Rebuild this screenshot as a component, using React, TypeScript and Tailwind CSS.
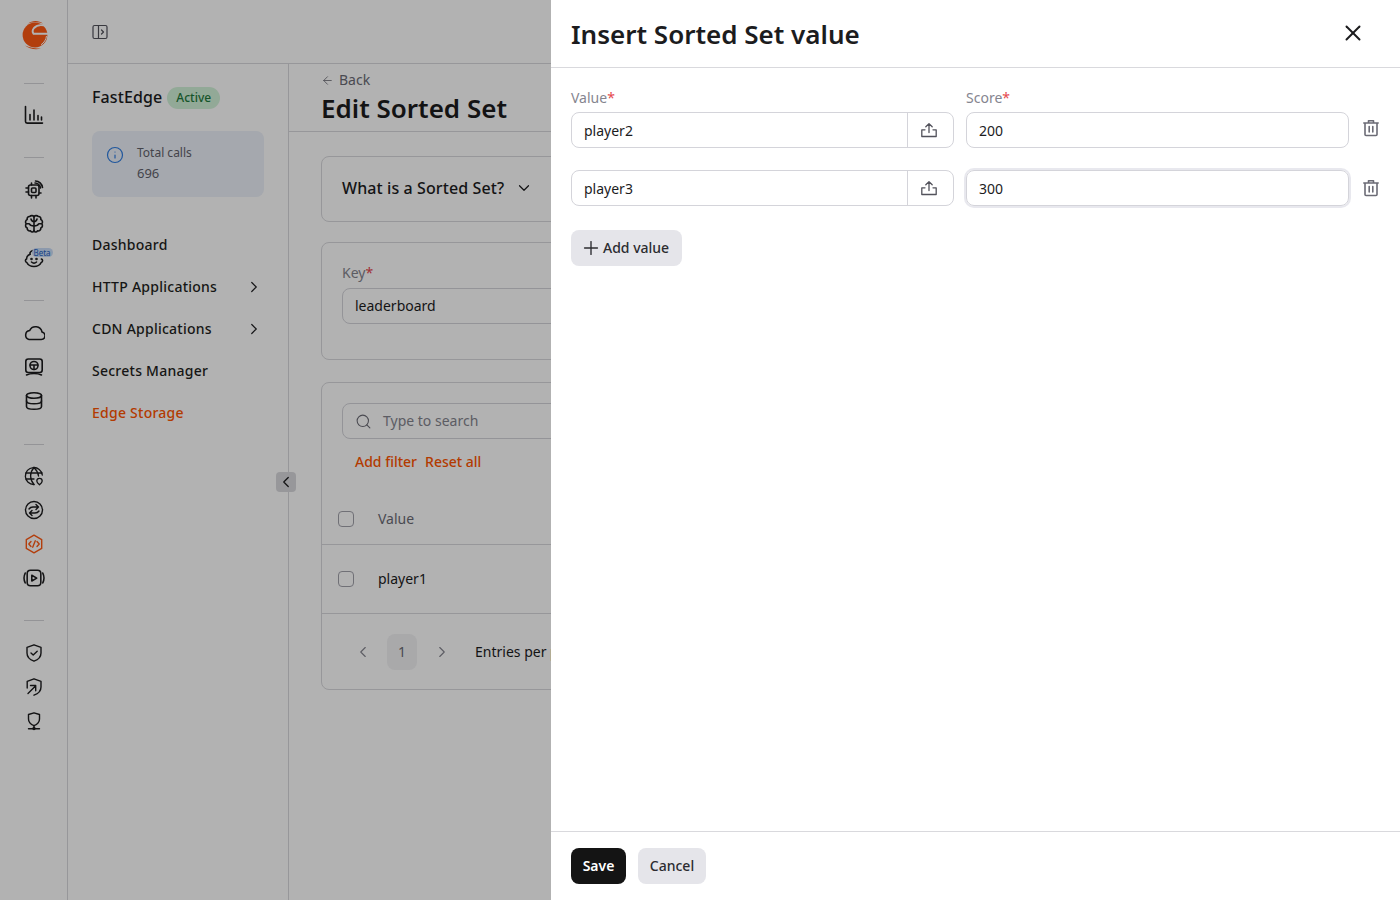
import React from "react";
import { ChevronDown, ChevronLeft, ChevronRight, Search, ArrowLeft, Plus, X, Info } from "lucide-react";

const S = ({ children, className = "", w = 20, sw = 1.6 }: { children: React.ReactNode; className?: string; w?: number; sw?: number }) => (
  <svg width={w} height={w} viewBox="0 0 20 20" fill="none" stroke="currentColor" strokeWidth={sw} strokeLinecap="round" strokeLinejoin="round" className={className}>
    {children}
  </svg>
);

const Logo = () => (
  <svg width="28" height="30" viewBox="0 0 28 30" fill="none">
    <circle cx="14" cy="15" r="12.400" fill="#ff5a14" />
    <path d="M7 3.500 C11 0 18 0 22 3.500 C17 1.800 11.500 2 7 3.500 Z" fill="#ff5a14" />
    <path d="M26 6.500 C21 4.500 16 4.800 13 8 C11.400 10 11.200 12 12.500 13.800 L27 13.800" stroke="#fff" strokeWidth="1.900" />
    <path d="M25.500 16 C25 20 23 22.500 20 24.800" stroke="#fff" strokeWidth="1" />
    <path d="M4 25.500 C8 29 15 30 20 28.500 C15 28.500 9 28 4 25.500 Z" fill="#ff5a14" />
  </svg>
);

const Chart = () => (
  <S w={20}><path d="M1.500 1.500V16.500a1.600 1.600 0 0 0 1.600 1.600H18.500" /><path d="M6 9.500V15M10 5V15M14 10.500V15M17.500 12V15" /></S>
);
const Chip = () => (
  <S><rect x="4.500" y="5" width="10.500" height="10.500" rx="2" /><rect x="7.500" y="8" width="4.500" height="4.500" rx="1" /><path d="M2 8h2.500M2 12h2.500M7.500 15.500V18M12 15.500V18M15 13h2M7.500 3v2" /><path d="M11 3c2.500 0 5 2 5.500 5M11.500 1c3.500 0 6.500 3 7 6.500" /></S>
);
const Brain = () => (
  <S>
    <path d="M10 3C9.500 1.500 7 1 5.800 2.500 4 2.200 2.800 3.800 3.200 5.500 1.500 6.200 1 8.500 2.200 9.800 1 11.200 1.600 13.500 3.200 14 3 16 4.800 17.500 6.500 16.800 7.500 18.500 9.700 18.200 10 16.500V3Z" />
    <path d="M10 3C10.500 1.500 13 1 14.200 2.500 16 2.200 17.200 3.800 16.800 5.500 18.500 6.200 19 8.500 17.800 9.800 19 11.200 18.400 13.500 16.800 14 17 16 15.200 17.500 13.500 16.800 12.500 18.500 10.300 18.200 10 16.500" />
    <path d="M10 7.500C8.500 7.500 7.300 6.500 7 5M10 7.500C11.500 7.500 12.700 6.500 13 5M10 12C7.800 12 6 11.500 5.300 9.800H2.800M10 12C12.200 12 14 11.500 14.700 9.800H17.200" />
  </S>
);
const Baby = () => (
  <S><path d="M9 2.500C6.500 3 5.500 5 6.200 6.200 4 7 2.500 9 2.600 11 1 11.500 1 14 2.800 14.500 4 17 6.500 18.500 10 18.500c3.500 0 6-1.500 7.200-4 1.800-.5 1.800-3 .2-3.500" /><circle cx="7.500" cy="11" r=".5" fill="currentColor" /><circle cx="12.500" cy="11" r=".5" fill="currentColor" /><path d="M7.500 14c1.500 1.300 3.500 1.300 5 0" /></S>
);
const Cloud = () => (
  <S w={22} sw={1.400}><path d="M5.500 16h11a3.500 3.500 0 0 0 .8-6.900A6 6 0 0 0 6 7.800 4.200 4.200 0 0 0 5.500 16Z" /></S>
);
const Screen = () => (
  <S><rect x="1.800" y="2" width="16.400" height="13.500" rx="2.500" /><circle cx="10" cy="8.500" r="4" /><path d="M6.200 8h7.600M10 8.500v4" /><path d="M2.500 18c4-2 11-2 15 0" /></S>
);
const Db = () => (
  <S><ellipse cx="10" cy="4.500" rx="7.500" ry="2.800" /><path d="M2.500 4.500v11c0 1.600 3.400 2.800 7.500 2.800s7.500-1.200 7.500-2.800v-11" /><path d="M2.500 10c0 1.600 3.400 2.800 7.500 2.800s7.500-1.200 7.500-2.800" /></S>
);
const GlobePin = () => (
  <S sw={1.300}><path d="M18.300 9A8.500 8.500 0 1 0 10 18.500" /><path d="M10 1.500c-4.500 5-4.500 12 0 17M10 1.500c3 3 4.300 6 4.500 8.500M2 7h16M2 13h8" /><path d="M15.500 18.800c-1.500-1.300-2.700-2.500-2.700-3.800a2.700 2.700 0 0 1 5.400 0c0 1.300-1.200 2.500-2.700 3.800Z" /></S>
);
const Swap = () => (
  <S sw={1.400}><circle cx="10" cy="10" r="8.500" /><path d="M5 9c1-1.500 2.500-2 4-2h5.500M12 4.500 14.500 7 12 9.500M15 11c-1 1.500-2.500 2-4 2H5.500M8 10.500 5.500 13 8 15.500" /></S>
);
const Code = () => (
  <S sw={1.400}><path d="M10 1.200 17.700 5.600V14.400L10 18.800 2.300 14.400V5.600Z" /><path d="M7 7.500 4.800 10 7 12.500M13 7.500 15.200 10 13 12.500M11.300 6.800 8.700 13.200" /></S>
);
const Video = () => (
  <S w={22} sw={1.400}><rect x="3.800" y="3" width="12.400" height="14" rx="3" /><path d="M2 5.500C.8 8 .8 12 2 14.500M18 5.500C19.200 8 19.200 12 18 14.500" /><path d="M8 7.500v5.200l4.500-2.600Z" /></S>
);
const Shield = () => (
  <S sw={1.400}><path d="M10 1.800 17 4.300V10c0 4-3 6.800-7 8.200-4-1.400-7-4.200-7-8.200V4.300Z" /><path d="M7 10l2.200 2 4-3.800" /></S>
);
const ShieldArrow = () => (
  <S sw={1.400}><path d="M3.200 11V4.300L10 1.800l7 2.500V10c0 4-3 6.800-7 8.200" /><path d="M4 16.500 11.500 9M6.500 8.500h5.200v5.200" /></S>
);
const ShieldNet = () => (
  <S sw={1.400}><path d="M10 1.800 15.500 3.500V8c0 3.500-2.500 5.500-5.500 6.700C7 13.500 4.500 11.500 4.500 8V3.500Z" /><path d="M10 14.700V17M4.500 17.800h11" /><circle cx="10" cy="17.500" r="1" fill="currentColor" /></S>
);

const Sep = () => <div className="h-px w-5 bg-[#d4d4d8]" />;
const Rail = ({ children, active }: { children: React.ReactNode; active?: boolean }) => (
  <div className={`flex h-[34px] w-full items-center justify-center ${active ? "text-[#ff5a14]" : "text-[#1c1c1e]"}`}>{children}</div>
);

const Nav = ({ label, arrow, active }: { label: string; arrow?: boolean; active?: boolean }) => (
  <div className={`flex h-[42px] items-center justify-between pr-[25px] text-sm font-medium tracking-[0.25px] ${active ? "text-[#ff5500]" : "text-[#1f1f22]"}`}>
    <span>{label}</span>
    {arrow && <ChevronRight size={18} strokeWidth={1.6} />}
  </div>
);

const Upload = () => (
  <svg width="18" height="18" viewBox="0 0 18 18" fill="none" stroke="#52525b" strokeWidth="1.300" strokeLinecap="round" strokeLinejoin="round">
    <path d="M9 11.500V2.800M5.800 5.800 9 2.600l3.200 3.200" />
    <path d="M5 8.800H1.800v6.700h14.400V8.800H13" />
  </svg>
);

const Row = ({ value, score, label, focused }: { value: string; score: string; label?: boolean; focused?: boolean }) => (
  <div className="flex gap-3">
    <div className="w-[383px] shrink-0">
      {label && <div className="mb-[6px] h-[17px] text-sm leading-[17px] text-[#85858f]">Value<span className="text-[#e5484d]">*</span></div>}
      <div className={`flex h-9 items-center rounded-lg border border-[#d4d4da] ${focused ? "border-[#c0c0c8]" : ""}`}>
        <div className="flex-1 px-3 pt-[1px] text-sm text-[#1c1c1e]">{value}</div>
        <div className="flex h-full w-[46px] items-center justify-center border-l border-[#d4d4da] pr-[4px]"><Upload /></div>
      </div>
    </div>
    <div className="w-[383px] shrink-0">
      {label && <div className="mb-[6px] h-[17px] text-sm leading-[17px] text-[#85858f]">Score<span className="text-[#e5484d]">*</span></div>}
      <div className={`flex h-9 items-center rounded-lg border border-[#d4d4da] px-3 pt-[1px] text-sm text-[#1c1c1e] ${focused ? "shadow-[0_0_0_2px_#e8e8ee]" : ""}`}>{score}</div>
    </div>
    <div className={`flex w-[19px] shrink-0 items-end justify-center ${label ? "pb-[11px]" : "pb-[9px]"}`}>
      <svg width="18" height="18" viewBox="0 0 18 18" fill="none" stroke="#6b6b75" strokeWidth="1.600" strokeLinecap="round" strokeLinejoin="round">
        <path d="M1.800 4h14.400M6.500 4V1.800h5V4M3 4v11.500a1 1 0 0 0 1 1h10a1 1 0 0 0 1-1V4M7.200 7.500v5.500M10.800 7.500v5.500" />
      </svg>
    </div>
  </div>
);

export default function App() {
  return (
    <div className="relative flex h-[900px] w-full overflow-hidden bg-white font-['Noto_Sans',sans-serif] text-[#1c1c1e]">
      {/* Icon rail */}
      <aside className="flex w-[68px] shrink-0 flex-col items-center border-r border-[#d9d9dd]">
        <div className="flex h-[83px] w-full items-start justify-center pl-[3px] pt-5"><Logo /></div>
        <Sep />
        <div className="flex w-full flex-col pb-[25px] pt-[14px]"><Rail><Chart /></Rail></div>
        <Sep />
        <div className="flex w-full flex-col pb-[25px] pt-[15px]">
          <Rail><Chip /></Rail>
          <Rail><Brain /></Rail>
          <Rail>
            <div className="relative">
              <Baby />
              <span className="absolute left-[8px] top-0 rounded-full bg-[#c9dcf7] px-[2px] text-[8px] leading-[9px] text-[#1f5fbf]">Beta</span>
            </div>
          </Rail>
        </div>
        <Sep />
        <div className="flex w-full flex-col pb-[26px] pt-[15px]">
          <Rail><Cloud /></Rail>
          <Rail><Screen /></Rail>
          <Rail><Db /></Rail>
        </div>
        <Sep />
        <div className="flex w-full flex-col pb-[25px] pt-[14px]">
          <Rail><GlobePin /></Rail>
          <Rail><Swap /></Rail>
          <Rail active><Code /></Rail>
          <Rail><Video /></Rail>
        </div>
        <Sep />
        <div className="flex w-full flex-col pt-[15px]">
          <Rail><Shield /></Rail>
          <Rail><ShieldArrow /></Rail>
          <Rail><ShieldNet /></Rail>
        </div>
      </aside>

      <div className="flex min-w-0 flex-1 flex-col">
        {/* Top bar */}
        <header className="flex h-16 shrink-0 items-center border-b border-[#d9d9dd] pl-6">
          <svg width="16" height="16" viewBox="0 0 16 16" fill="none" stroke="#52525b" strokeWidth="1.200" strokeLinecap="round" strokeLinejoin="round">
            <rect x="1" y="1.500" width="14" height="13" rx="1.500" />
            <path d="M6.500 1.500v13M9.500 6l2 2-2 2" />
          </svg>
        </header>

        <div className="flex min-h-0 flex-1">
          {/* Secondary sidebar */}
          <aside className="relative w-[221px] shrink-0 border-r border-[#d9d9dd] pl-6">
            <div className="flex items-center gap-[5px] pt-[21px]">
              <span className="text-base font-medium tracking-[0.1px] text-[#1c1c1e]">FastEdge</span>
              <span className="mt-[2px] flex h-[22px] w-[53px] items-center justify-center rounded-full bg-[#d2f2d8] text-xs font-medium text-[#1f7a3d]">Active</span>
            </div>
            <div className="mt-[22px] flex h-[66px] w-[172px] rounded-lg bg-[#ecf1f9] pl-[14px] pt-[12px]">
              <Info size={18} strokeWidth={1.600} className="mt-[3px] text-[#2f7de1]" />
              <div className="ml-[13px] text-xs leading-[20px] text-[#62626c]">
                <div>Total calls</div>
                <div className="text-[13px]">696</div>
              </div>
            </div>
            <div className="mt-[27px]">
              <Nav label="Dashboard" />
              <Nav label="HTTP Applications" arrow />
              <Nav label="CDN Applications" arrow />
              <Nav label="Secrets Manager" />
              <Nav label="Edge Storage" active />
            </div>
            <div className="absolute right-[-8px] top-[408px] flex h-5 w-5 items-center justify-center rounded bg-[#d9d9dd] text-[#1c1c1e]">
              <ChevronLeft size={18} strokeWidth={1.700} />
            </div>
          </aside>

          {/* Main */}
          <main className="min-w-0 flex-1">
            <div className="h-[68px] border-b border-[#d9d9dd] pl-8 pt-[7px]">
              <div className="flex items-center gap-[5px] text-sm leading-[18px] text-[#6b6b75]"><ArrowLeft size={13} strokeWidth={1.500} />Back</div>
              <div className="mt-[2px] text-[26px] font-semibold leading-[34px] text-[#1c1c1e]">Edit Sorted Set</div>
            </div>
            <div className="flex flex-col pl-8 pt-6">
              <div className="flex h-[66px] w-[1000px] items-center gap-[11px] rounded-lg border border-[#d9d9dd] pb-[2px] pl-5 text-base font-medium tracking-[0.1px]">
                What is a Sorted Set? <ChevronDown size={18} strokeWidth={1.600} />
              </div>
              <div className="mt-5 h-[118px] w-[1000px] rounded-lg border border-[#d9d9dd] px-5 pt-[20px]">
                <div className="h-[19px] text-sm leading-[19px] text-[#85858f]">Key<span className="text-[#e5484d]">*</span></div>
                <div className="mt-[6px] flex h-9 items-center rounded-lg border border-[#d4d4da] px-3 text-sm">leaderboard</div>
              </div>
              <div className="mt-[22px] w-[1000px] rounded-lg border border-[#d9d9dd]">
                <div className="px-5 pt-5">
                  <div className="flex h-9 items-center gap-[11px] rounded-lg border border-[#d4d4da] px-3 text-sm text-[#85858f]">
                    <Search size={17} strokeWidth={1.500} className="text-[#6b6b75]" />
                    <span>Type to search</span>
                  </div>
                  <div className="mt-[13px] flex gap-2 pl-[13px] text-sm font-medium leading-[20px] text-[#ff5500]">
                    <span>Add filter</span><span>Reset all</span>
                  </div>
                </div>
                <div className="mt-[22px] flex h-[51px] items-center border-b border-[#d9d9dd] pl-4 text-sm text-[#6b6b75]">
                  <span className="mr-[24px] h-4 w-4 rounded border border-[#a1a1aa]" />Value
                </div>
                <div className="flex h-[69px] items-center border-b border-[#d9d9dd] pl-4 text-sm">
                  <span className="mr-[24px] h-4 w-4 rounded border border-[#a1a1aa]" />player1
                </div>
                <div className="flex h-[75px] items-center pl-[32px] text-sm">
                  <ChevronLeft size={18} strokeWidth={1.500} className="text-[#85858f]" />
                  <span className="ml-[15px] flex h-9 w-[30px] items-center justify-center rounded-lg bg-[#f2f2f4] text-[#6b6b75]">1</span>
                  <ChevronRight size={18} strokeWidth={1.500} className="ml-[16px] text-[#85858f]" />
                  <span className="ml-[24px]">Entries per page</span>
                </div>
              </div>
            </div>
          </main>
        </div>
      </div>

      {/* Scrim */}
      <div className="absolute inset-0 bg-black/30" />

      {/* Drawer */}
      <section className="absolute bottom-0 right-0 top-0 flex w-[849px] flex-col bg-white">
        <div className="flex h-[68px] shrink-0 items-center justify-between border-b border-[#d9d9dd] pl-5 pr-[34px]">
          <h1 className="pt-[1px] text-[26px] font-semibold text-[#1c1c1e]">Insert Sorted Set value</h1>
          <X size={26} strokeWidth={1.800} className="mt-[-2px]" />
        </div>
        <div className="flex-1 px-5 pt-[21px]">
          <div className="flex flex-col gap-[22px]">
            <Row value="player2" score="200" label />
            <Row value="player3" score="300" focused />
          </div>
          <button className="mt-6 flex h-9 w-[111px] items-center gap-px rounded-lg bg-[#e5e5ea] pl-[9px] text-sm font-medium text-[#2c2c30]">
            <Plus size={22} strokeWidth={1.500} />Add value
          </button>
        </div>
        <div className="flex h-[69px] shrink-0 items-center gap-3 border-t border-[#d9d9dd] pl-5">
          <button className="h-9 w-[55px] rounded-lg bg-[#141414] text-sm font-semibold text-white">Save</button>
          <button className="h-9 w-[68px] rounded-lg bg-[#e5e5ea] text-sm font-medium text-[#2c2c30]">Cancel</button>
        </div>
      </section>
    </div>
  );
}
